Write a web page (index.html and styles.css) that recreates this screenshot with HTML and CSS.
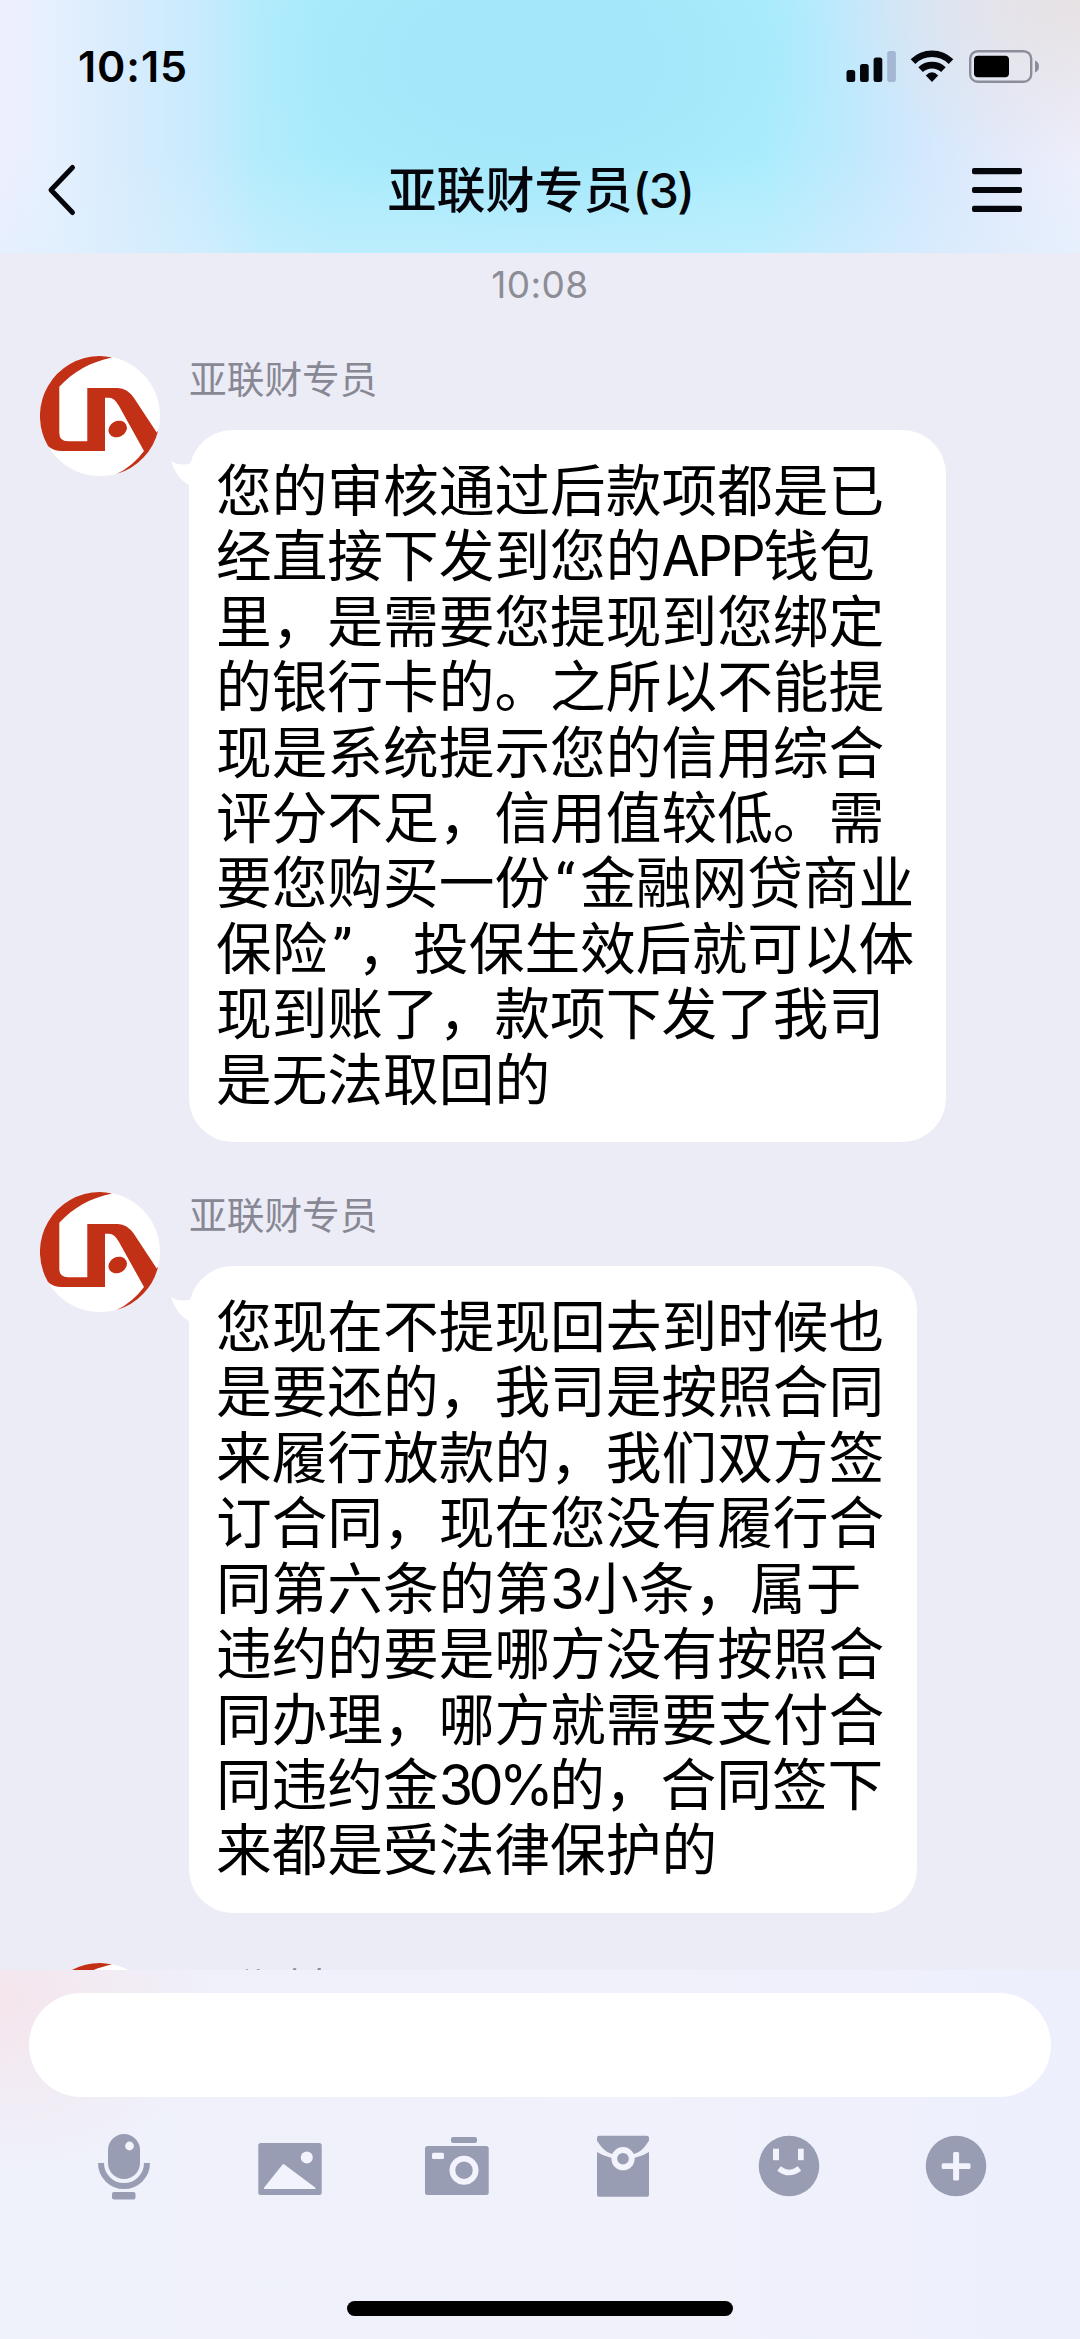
FILE: index.html
```html
<!DOCTYPE html>
<html lang="zh-CN">
<head>
<meta charset="utf-8">
<title>亚联财专员(3)</title>
<link rel="stylesheet" href="styles.css">
</head>
<body>
<svg class="defs" width="0" height="0" aria-hidden="true">
  <symbol id="logo" viewBox="0 0 120 120">
    <circle cx="60" cy="60" r="60" fill="#fff"/>
    <path fill="#c23016" d="M72 1.500A60 60 0 0 0 60 0A60 60 0 0 0 8 90Q13 95 22 95H65V41.700H69Q74.500 41.700 79 50L104 95Q93 110 76.700 118A60 60 0 0 0 118.200 74.500L116.700 76.500L94 42Q87 32 78 32H47.300V85.300H28Q19.300 85.300 19.300 77V30.700C33 16 50 6 72 1.500Z"/>
    <ellipse cx="77.700" cy="73" rx="9.500" ry="8" transform="rotate(-28 77.700 73)" fill="#c23016"/>
  </symbol>
  <symbol id="tail" viewBox="0 0 24 28">
    <path fill="#fff" d="M0 1Q8 6 17 4L24 2V28L19 26Q5 18 0 1Z"/>
  </symbol>
</svg>
<div class="phone">
  <header class="header">
    <div class="status">
      <span class="clock">10:15</span>
      <svg class="indicators" width="196" height="36" viewBox="845 48 196 36">
        <g fill="#05060c">
          <rect x="846.500" y="70" width="8.700" height="12" rx="2.500"/>
          <rect x="860" y="64" width="8.700" height="18" rx="2.500"/>
          <rect x="873.600" y="57.500" width="8.700" height="24.500" rx="2.500"/>
          <rect x="887.200" y="51" width="8.700" height="31" rx="2.500" fill="#a3b7d2"/>
          <path d="M932 82L925.800 75.500Q932 69 938.200 75.500Z"/>
        </g>
        <path d="M913 61.600A27 27 0 0 1 951 61.600M920.600 69.700A16.500 16.500 0 0 1 943.400 69.700" fill="none" stroke="#05060c" stroke-width="6.600"/>
        <rect x="970.200" y="51.200" width="61" height="30.500" rx="7.500" fill="none" stroke="#8b8e9a" stroke-width="2.400"/>
        <rect x="974" y="55.700" width="35" height="21.500" rx="4" fill="#000"/>
        <path d="M1035 60.500Q1039 62 1039 66.500T1035 72.500Z" fill="#8b8e9a"/>
      </svg>
    </div>
    <div class="navbar">
      <svg class="back" width="34" height="56" viewBox="0 0 34 56"><path d="M26.500 5.500L5 28L26.500 50.500" fill="none" stroke="#05060c" stroke-width="5" stroke-linecap="round" stroke-linejoin="round"/></svg>
      <h1 class="title">亚联财专员<span class="count">(3)</span></h1>
      <svg class="menu" width="50" height="44" viewBox="0 0 50 44" fill="#05060c"><rect width="50" height="6.200" rx="2"/><rect y="18.900" width="50" height="6.200" rx="2"/><rect y="37.800" width="50" height="6.200" rx="2"/></svg>
    </div>
  </header>

  <main class="chat">
    <time class="stamp">10:08</time>
    <article class="message">
      <svg class="avatar"><use href="#logo"/></svg>
      <div class="content">
        <div class="name">亚联财专员</div>
        <div class="bubble wide">
          <svg class="tail"><use href="#tail"/></svg>
          <p class="text">您的审核通过后款项都是已<br>经直接下发到您的<span class="app">APP</span>钱包<br>里，是需要您提现到您绑定<br>的银行卡的。之所以不能提<br>现是系统提示您的信用综合<br>评分不足，信用值较低。需<br>要您购买一份<span class="quote">“</span>金融网贷商业<br>保险<span class="quote">”</span>，投保生效后就可以体<br>现到账了，款项下发了我司<br>是无法取回的</p>
        </div>
      </div>
    </article>
    <article class="message">
      <svg class="avatar"><use href="#logo"/></svg>
      <div class="content">
        <div class="name">亚联财专员</div>
        <div class="bubble">
          <svg class="tail"><use href="#tail"/></svg>
          <p class="text">您现在不提现回去到时候也<br>是要还的，我司是按照合同<br>来履行放款的，我们双方签<br>订合同，现在您没有履行合<br>同第六条的第<span class="digit">3</span>小条，属于<br>违约的要是哪方没有按照合<br>同办理，哪方就需要支付合<br>同违约金<span class="percent">30%</span>的，合同签下<br>来都是受法律保护的</p>
        </div>
      </div>
    </article>
    <article class="message">
      <svg class="avatar"><use href="#logo"/></svg>
      <div class="content"><div class="name">亚联财专员</div></div>
    </article>
  </main>

  <footer class="composer">
    <div class="input"></div>
    <div class="tools">
      <svg viewBox="0 0 80 80">
        <rect x="24" y="8" width="32" height="45" rx="16"/><circle class="cut" cx="45.500" cy="20" r="4.400"/>
        <path class="line" d="M17 37A23 23 0 0 0 63 37"/><rect x="28" y="66" width="23.500" height="7.500" rx="2"/>
      </svg>
      <svg viewBox="0 0 80 80">
        <rect x="8.300" y="17" width="63.400" height="52" rx="2.500"/><circle class="cut" cx="56.800" cy="31.400" r="6"/>
        <path class="cut" d="M32.600 38.500Q33.400 37.500 34.400 38.500L65.500 61.800Q66 63 65 63H14.500Q13.300 63 14 61.800Z"/>
      </svg>
      <svg viewBox="0 0 80 80">
        <rect x="34" y="11" width="26" height="6" rx="2"/><rect x="8" y="20" width="63.700" height="49" rx="2.500"/>
        <rect class="cut" x="15" y="26.700" width="12" height="6.300" rx="1.500"/><circle class="cut" cx="47" cy="44.200" r="14.500"/><circle cx="47" cy="44.200" r="8.700"/>
      </svg>
      <svg viewBox="0 0 80 80">
        <path d="M14 12Q14 9.700 16.300 9.700H63.700Q66 9.700 66 12V14.500C62 21.500 57 26.500 50.500 28H29.500C23 26.500 18 21.500 14 14.500Z"/>
        <path d="M14 26Q20 30 28 31.700H52Q60 30 66 26V68.700Q66 70.700 64 70.700H16Q14 70.700 14 68.700Z"/>
        <circle class="cut" cx="40" cy="32.700" r="11.600"/><circle cx="40" cy="32.700" r="5.800"/>
      </svg>
      <svg viewBox="0 0 80 80">
        <circle cx="40" cy="40" r="30.300"/><rect class="cut" x="24" y="22.700" width="6" height="11.500"/><rect class="cut" x="49" y="22.700" width="5.700" height="11.500"/>
        <path class="smile" d="M30 42.500Q40 50.500 50.500 42.500"/>
      </svg>
      <svg viewBox="0 0 80 80">
        <circle cx="40" cy="40" r="30.300"/><rect class="cut" x="25.700" y="37.300" width="28.800" height="5.600" rx="1.500"/><rect class="cut" x="37.100" y="26" width="6" height="28.500" rx="1.500"/>
      </svg>
    </div>
    <div class="home"></div>
  </footer>
</div>
</body>
</html>
```
FILE: styles.css
```css
* { box-sizing: border-box; }
body { margin: 0; }
.phone {
  width: 1080px;
  height: 2339px;
  display: flex;
  flex-direction: column;
  overflow: hidden;
  background: #ececf6;
  font-family: Inter, "Noto Sans CJK SC", sans-serif;
  color: #000;
}
.defs { position: absolute; }

/* header */
.header {
  flex: none;
  height: 253px;
  background:
    radial-gradient(ellipse 260px 170px at 1080px 0, rgba(229, 223, 223, .85), rgba(229, 223, 228, 0)),
    radial-gradient(ellipse 300px 170px at 540px 60px, rgba(164, 230, 250, 1) 30%, rgba(166, 235, 252, 0)),
    linear-gradient(180deg, rgba(220, 240, 254, 0) 60%, rgba(220, 240, 254, .4)),
    linear-gradient(90deg, #eeeffe 0, #e6f0fe 50px, #d8ecfd 120px, #c8ebfd 200px, #b2ecfc 260px, #a8ecfc 330px, #a6ebfc 540px, #a9edfd 760px, #bfe9fd 850px, #d2e8fd 920px, #e3eafb 1000px, #eeeffc 1080px);
}
.status {
  height: 132px;
  display: flex;
  align-items: center;
  justify-content: space-between;
  padding: 0 39px 0 78px;
}
.clock { font-size: 43px; font-weight: 600; letter-spacing: .9px; }
.indicators { display: block; }
.navbar {
  height: 116px;
  display: grid;
  grid-template-columns: 80px 1fr 80px;
  align-items: center;
  padding: 0 58px 0 46px;
}
.menu { justify-self: end; }
.title {
  margin: 2px 0 0;
  padding-left: 13px;
  text-align: center;
  font-size: 49px;
  line-height: 60px;
  font-weight: 500;
  color: #05060c;
  white-space: nowrap;
}
.count { font-size: 48px; letter-spacing: -1.500px; }

/* conversation */
.chat { flex: none; height: 1717px; overflow: hidden; }
.stamp {
  display: block;
  height: 103px;
  padding-top: 12px;
  text-align: center;
  font-size: 37px;
  letter-spacing: .4px;
  line-height: 40px;
  color: #8d8d96;
}
.message { display: flex; gap: 29px; padding-left: 40px; margin-bottom: 50px; }
.avatar { width: 120px; height: 120px; flex: none; }
.name {
  height: 74px;
  padding-top: 3px;
  font-size: 37.700px;
  line-height: 40px;
  color: #888894;
}
.bubble {
  position: relative;
  width: 728px;
  padding: 28px 28px 30px 27px;
  border-radius: 44px;
  background: #fff;
}
.bubble.wide { width: 757px; }
.tail { position: absolute; left: -18px; top: 30px; width: 24px; height: 28px; }
.text {
  margin: 0;
  font-size: 55.700px;
  line-height: 65.400px;
  white-space: nowrap;
}
.app { letter-spacing: -2.600px; }
.digit { letter-spacing: -1.500px; }
.percent { letter-spacing: -4.600px; }
.quote { display: inline-block; width: 30px; text-align: center; line-height: 1; font-family: Roboto, sans-serif; }

/* composer */
.composer {
  flex: 1;
  display: flex;
  flex-direction: column;
  align-items: center;
  padding-top: 23px;
  background:
    radial-gradient(ellipse 220px 170px at 0 30px, rgba(246, 228, 235, .9), rgba(240, 238, 244, 0)),
    linear-gradient(90deg, #eff1fb, #f0f1fa 60%, #edeffd);
}
.input { width: 1022px; height: 104px; border-radius: 52px; background: #fff; }
.tools {
  width: 998px;
  margin-top: 29px;
  display: grid;
  grid-template-columns: repeat(6, 1fr);
  justify-items: center;
}
.tools svg { width: 80px; height: 80px; fill: #999db3; }
.tools .cut { fill: #f2f3fc; }
.tools .line { fill: none; stroke: #999db3; stroke-width: 6; }
.tools .smile { fill: none; stroke: #f2f3fc; stroke-width: 5.500; }
.home { width: 386px; height: 15px; margin-top: 95px; border-radius: 8px; background: #000; }
```
